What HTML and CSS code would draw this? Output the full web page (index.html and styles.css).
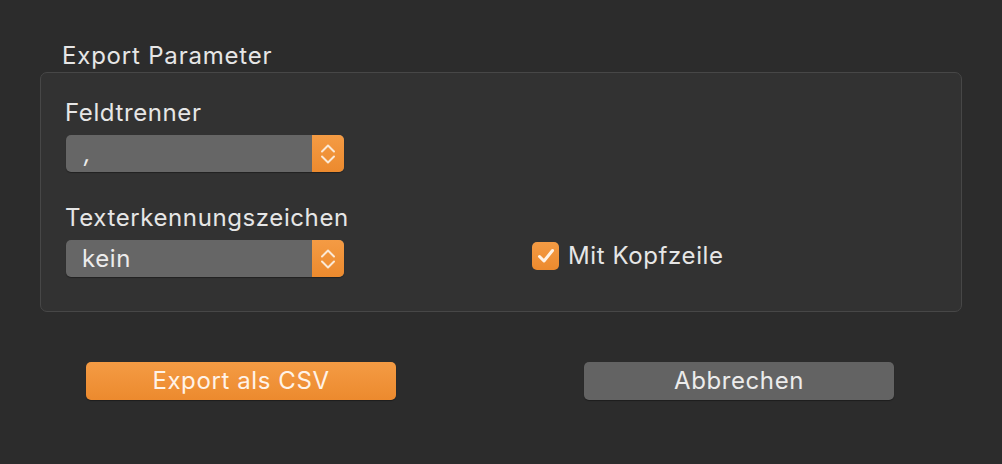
FILE: index.html
```html
<!DOCTYPE html>
<html lang="de">
<head>
<meta charset="utf-8">
<title>Export</title>
<link rel="stylesheet" href="styles.css">
</head>
<body>
<div class="dialog">
  <div class="legend">Export Parameter</div>
  <div class="box">
    <div class="col left">
      <div class="field">
        <div class="label">Feldtrenner</div>
        <div class="select">
          <span class="value comma">,</span>
          <span class="stepper">
            <svg width="16" height="24" viewBox="0 0 16 24"><path d="M2 9.5 L8 3.5 L14 9.5 M2 14.5 L8 20.5 L14 14.5" fill="none" stroke="#fbe9d6" stroke-width="2" stroke-linecap="round" stroke-linejoin="round"/></svg>
          </span>
        </div>
      </div>
      <div class="field field2">
        <div class="label">Texterkennungszeichen</div>
        <div class="select">
          <span class="value">kein</span>
          <span class="stepper">
            <svg width="16" height="24" viewBox="0 0 16 24"><path d="M2 9.5 L8 3.5 L14 9.5 M2 14.5 L8 20.5 L14 14.5" fill="none" stroke="#fbe9d6" stroke-width="2" stroke-linecap="round" stroke-linejoin="round"/></svg>
          </span>
        </div>
      </div>
    </div>
    <div class="col right">
      <label class="check">
        <span class="checkbox">
          <svg width="20" height="18" viewBox="0 0 20 18"><path d="M3.5 9.5 L8 14 L16.5 3.5" fill="none" stroke="#fff3e6" stroke-width="3" stroke-linecap="round" stroke-linejoin="round"/></svg>
        </span>
        <span class="check-label">Mit Kopfzeile</span>
      </label>
    </div>
  </div>
  <div class="buttons">
    <div class="btn primary">Export als CSV</div>
    <div class="btn secondary">Abbrechen</div>
  </div>
</div>
</body>
</html>
```
FILE: styles.css
```css
html, body {
  margin: 0;
  padding: 0;
}
body {
  background: #2c2c2c;
  width: 1002px;
  height: 464px;
  overflow: hidden;
  font-family: "Inter", "Roboto", "Liberation Sans", sans-serif;
  color: #e6e6e6;
  font-size: 24px;
  letter-spacing: 0.6px;
}
.dialog {
  padding: 41px 0 0 40px;
}
.legend {
  line-height: 30px;
  margin-left: 22px;
  height: 31px;
  letter-spacing: 0.8px;
}
.box {
  box-sizing: border-box;
  width: 922px;
  height: 240px;
  background: #323232;
  border: 1.5px solid #474747;
  border-radius: 7px;
  display: flex;
  padding: 25px 0 0 25px;
}
.left {
  flex: none;
  width: 466px;
}
.right {
  flex: 1;
  padding-top: 143px;
}
.field2 {
  margin-top: 31px;
}
.label {
  line-height: 30px;
  margin-bottom: 7px;
  margin-left: -1px;
}
.select {
  width: 278px;
  height: 37px;
  border-radius: 5px;
  background: #666666;
  display: flex;
  overflow: hidden;
  box-shadow: 0 1px 1px rgba(0,0,0,0.35);
}
.value {
  flex: 1;
  line-height: 37px;
  padding-left: 16px;
  color: #ececec;
}
.value.comma {
  padding-left: 18px;
  font-style: italic;
}
.stepper {
  width: 32px;
  background: linear-gradient(#f49b44, #ec8a2e);
  display: flex;
  align-items: center;
  justify-content: center;
}
.check {
  display: flex;
  align-items: center;
  gap: 9px;
}
.checkbox {
  width: 27px;
  height: 28px;
  border-radius: 5px;
  background: linear-gradient(#f49b44, #ec8a2e);
  display: flex;
  align-items: center;
  justify-content: center;
}
.check-label {
  line-height: 30px;
  color: #e6e6e6;
}
.buttons {
  display: flex;
  margin-top: 50px;
  padding-left: 46px;
  gap: 188px;
}
.btn {
  width: 310px;
  height: 38px;
  border-radius: 5px;
  line-height: 38px;
  text-align: center;
  box-shadow: 0 1px 1px rgba(0,0,0,0.35);
}
.primary {
  background: linear-gradient(#f49b44, #ec8a2e);
  color: #fff3e8;
}
.secondary {
  background: #636363;
  color: #ececec;
}
```
